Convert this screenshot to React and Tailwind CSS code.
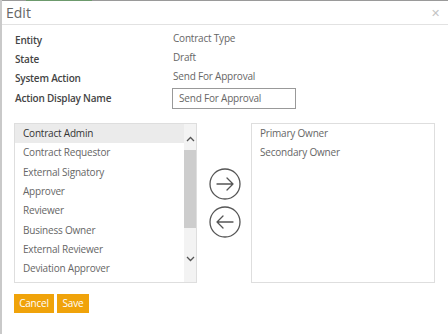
import React from "react";

const leftItems = [
  "Contract Admin",
  "Contract Requestor",
  "External Signatory",
  "Approver",
  "Reviewer",
  "Business Owner",
  "External Reviewer",
  "Deviation Approver",
];

const rightItems = ["Primary Owner", "Secondary Owner"];

const fields = [
  ["Entity", "Contract Type"],
  ["State", "Draft"],
  ["System Action", "Send For Approval"],
];

const CircleArrow = ({ dir }) => (
  <svg width="32" height="32" viewBox="0 0 32 32" fill="none" stroke="#555" strokeWidth="1.3">
    <circle cx="16" cy="16" r="15" />
    {dir === "right" ? (
      <path d="M8 16h16M18 10l6 6-6 6" strokeLinecap="round" strokeLinejoin="round" />
    ) : (
      <path d="M24 16H8M14 10l-6 6 6 6" strokeLinecap="round" strokeLinejoin="round" />
    )}
  </svg>
);

const Chevron = ({ up }) => (
  <svg width="9" height="6" viewBox="0 0 9 6" fill="none" stroke="#555" strokeWidth="1.3">
    {up ? <path d="M1 5l3.5-3.5L8 5" /> : <path d="M1 1l3.5 3.5L8 1" />}
  </svg>
);

export default function App() {
  return (
    <div className="w-[448px] h-[334px] bg-white border-l-2 border-[#c9c9c9] font-['Open_Sans',sans-serif] tracking-[-0.2px] overflow-hidden">
      {/* top edge */}
      <div className="flex h-px bg-[#9a9a9a]">
        <div className="ml-[24px] w-[66px] bg-[#6c9a6c]" />
      </div>

      {/* Header */}
      <div className="flex h-[24px] items-center justify-between border-b border-[#e2e2e2] pl-[4px] pr-[8px]">
        <span className="text-[14px] tracking-normal text-[#666]">Edit</span>
        <span className="text-[11px] leading-none text-[#c4c4c4]">✕</span>
      </div>

      {/* Fields */}
      <div className="pl-[13px] pt-[4px]">
        {fields.map(([label, value]) => (
          <div key={label} className="flex h-[19px] items-center">
            <span className="w-[158px] pt-[3px] text-[10px] font-semibold text-[#444]">{label}</span>
            <span className="text-[10px] text-[#666]">{value}</span>
          </div>
        ))}
        <div className="mt-[2px] flex items-center">
          <span className="w-[157px] text-[10px] font-semibold text-[#444]">Action Display Name</span>
          <div className="flex h-[21px] w-[124px] items-center border border-[#999] pl-[6px] text-[10px] text-[#666]">
            Send For Approval
          </div>
        </div>
      </div>

      {/* Lists */}
      <div className="mt-[14px] flex pl-[12px]">
        <div className="flex h-[160px] w-[183px] border border-[#dedede]">
          <div className="flex-1">
            {leftItems.map((item, i) => (
              <div
                key={item}
                className={`flex h-[19.3px] items-center pl-[8px] text-[10px] ${
                  i === 0 ? "bg-[#ebebeb] text-[#333]" : "text-[#666]"
                }`}
              >
                {item}
              </div>
            ))}
          </div>
          <div className="flex w-[12px] flex-col items-center bg-[#f3f3f3]">
            <div className="flex h-[26px] items-center pt-[4px]">
              <Chevron up />
            </div>
            <div className="h-[78px] w-full bg-[#cdcdcd]" />
            <div className="flex flex-1 items-center pt-[8px]">
              <Chevron />
            </div>
          </div>
        </div>

        <div className="flex w-[54px] flex-col items-center justify-center gap-[6px] pl-[1px]">
          <CircleArrow dir="right" />
          <CircleArrow dir="left" />
        </div>

        <div className="h-[160px] w-[184px] border border-[#dedede]">
          {rightItems.map((item) => (
            <div key={item} className="flex h-[19.3px] items-center pl-[8px] text-[10px] text-[#666]">
              {item}
            </div>
          ))}
        </div>
      </div>

      {/* Buttons */}
      <div className="mt-[11px] flex gap-[3px] pl-[12px]">
        <button className="h-[19px] w-[40px] bg-[#f0a30a] text-[10px] text-white">Cancel</button>
        <button className="h-[19px] w-[32px] bg-[#f0a30a] text-[10px] text-white">Save</button>
      </div>
    </div>
  );
}
